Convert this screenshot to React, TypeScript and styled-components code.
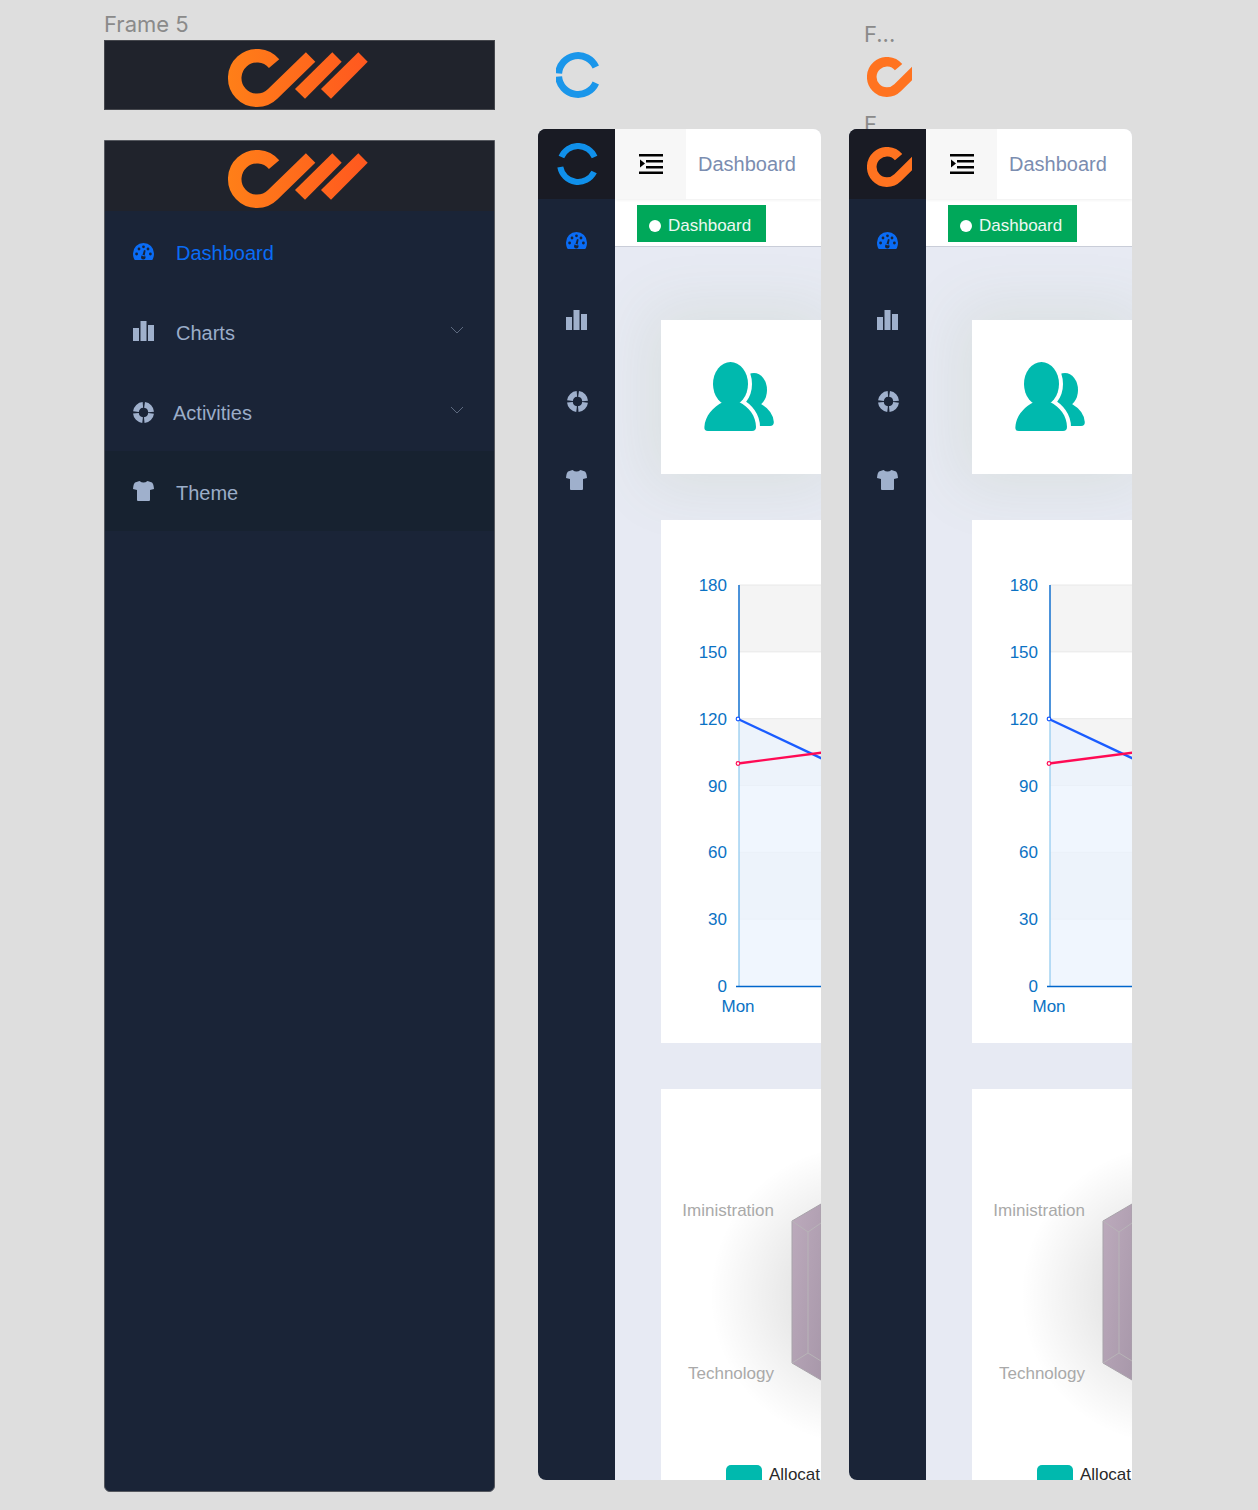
import React from "react";
import styled, { createGlobalStyle } from "styled-components";

const GlobalStyle = createGlobalStyle`
  html, body { margin: 0; padding: 0; background: #dedede; }
  body { font-family: "Liberation Sans", Arial, sans-serif; }
`;

const Canvas = styled.div`
  position: relative;
  width: 1258px;
  height: 1510px;
  overflow: hidden;
  background: #dedede;
`;

const Placed = styled.div<{ $x: number; $y: number }>`
  position: absolute;
  left: ${(p) => p.$x}px;
  top: ${(p) => p.$y}px;
`;

const FrameLabel = styled(Placed)`
  font-family: Inter, sans-serif;
  font-size: 22px;
  line-height: 24px;
  color: #8a8a8a;
`;

const LogoBar = styled.div`
  box-sizing: border-box;
  height: 70px;
  display: flex;
  justify-content: center;
  padding-top: 6px;
  background: #20232c;
`;

const TopBar = styled(Placed)`
  width: 391px;
  outline: 1px solid #45474d;
  outline-offset: -1px;
`;

const SideFrame = styled(Placed)`
  box-sizing: border-box;
  width: 391px;
  height: 1352px;
  display: flex;
  flex-direction: column;
  overflow: hidden;
  border: 1px solid #55585f;
  border-radius: 0 0 6px 6px;
  background: #1a2437;
`;

const MenuItem = styled.div<{ $dark?: boolean }>`
  flex: none;
  height: 80px;
  display: flex;
  align-items: center;
  padding: 0 30px 0 28px;
  background: ${(p) => (p.$dark ? "#172230" : "transparent")};
`;

const MenuIcon = styled.span<{ $active?: boolean; $drop?: number }>`
  display: flex;
  width: 21px;
  margin-top: ${(p) => p.$drop ?? 0}px;
  color: ${(p) => (p.$active ? "#0a6cf5" : "#9fb0cc")};
`;

const MenuText = styled.span<{ $active?: boolean; $gap?: number }>`
  flex: 1;
  margin-left: ${(p) => p.$gap ?? 22}px;
  padding-top: 4px;
  font-size: 20px;
  color: ${(p) => (p.$active ? "#0a6cf5" : "#9badc9")};
`;

const Chevron = styled.svg`
  width: 14px;
  height: 8px;
  margin-top: -3px;
  fill: none;
  stroke: #5d6a80;
  stroke-width: 1;
`;

const Phone = styled(Placed)`
  width: 283px;
  height: 1351px;
  display: flex;
  overflow: hidden;
  border-radius: 8px 8px 0 8px;
  background: #e7eaf3;
`;

const Rail = styled.div`
  position: relative;
  z-index: 2;
  flex: none;
  width: 77px;
  display: flex;
  flex-direction: column;
  background: #1a2437;
`;

const RailLogo = styled.div<{ $pad: number; $drop?: number }>`
  box-sizing: border-box;
  flex: none;
  height: 70px;
  display: flex;
  align-items: center;
  padding: ${(p) => p.$drop ?? 0}px 0 0 ${(p) => p.$pad}px;
  background: #191b24;
`;

const RailItem = styled.div<{ $active?: boolean; $dx?: number; $dy?: number }>`
  box-sizing: border-box;
  flex: none;
  height: 80px;
  display: flex;
  align-items: center;
  padding: ${(p) => p.$dy ?? 0}px 0 0 ${(p) => 28 + (p.$dx ?? 0)}px;
  color: ${(p) => (p.$active ? "#0a6cf5" : "#9fb0cc")};
`;

const Main = styled.div`
  flex: 1;
  min-width: 0;
  display: flex;
  flex-direction: column;
`;

const Header = styled.div`
  position: relative;
  z-index: 1;
  flex: none;
  height: 70px;
  display: flex;
  align-items: center;
  background: #fff;
  box-shadow: 0 1px 3px rgba(0, 0, 0, 0.07);
`;

const MenuToggle = styled.div`
  align-self: stretch;
  width: 71px;
  display: flex;
  align-items: center;
  justify-content: center;
  background: #f7f7f7;
`;

const HeaderTitle = styled.div`
  margin-left: 12px;
  font-size: 20px;
  color: #7b8db0;
`;

const TagBar = styled.div`
  box-sizing: border-box;
  flex: none;
  height: 48px;
  padding: 6px 0 0 22px;
  background: #fff;
  border-bottom: 1px solid #c9cdd8;
`;

const Tag = styled.div`
  box-sizing: border-box;
  width: 129px;
  height: 37px;
  display: flex;
  align-items: center;
  gap: 7px;
  padding: 5px 0 0 12px;
  font-size: 17px;
  color: #eef8f2;
  background: #00a85a;
`;

const TagDot = styled.span`
  width: 12px;
  height: 12px;
  border-radius: 50%;
  background: #fff;
`;

const Content = styled.div`
  flex: 1;
  display: flex;
  flex-direction: column;
  gap: 46px;
  padding: 73px 0 0 46px;
`;

const Card = styled.div<{ $height: number; $glow?: boolean }>`
  box-sizing: border-box;
  flex: none;
  height: ${(p) => p.$height}px;
  overflow: hidden;
  background: #fff;
  box-shadow: ${(p) => (p.$glow ? "0 0 58px 12px rgba(106, 134, 68, 0.1)" : "none")};
`;

const StatCard = styled(Card)`
  overflow: visible;
  display: flex;
  align-items: flex-start;
  padding-top: 40px;
  padding-left: 41px;
`;

const DrawingSvg = styled.svg`
  display: block;
  font-family: "Liberation Sans", Arial, sans-serif;
`;

// dome with five punched dots and the needle hub
const gaugeHoles = [
  [3.6, 11, 1.4],
  [6, 6, 1.4],
  [10.5, 3.8, 1.4],
  [15, 6, 1.4],
  [17.4, 11, 1.4],
  [10.3, 14.2, 2.3],
]
  .map(([x, y, r]) => `M${x - r} ${y} a${r} ${r} 0 1 0 ${2 * r} 0 a${r} ${r} 0 1 0 ${-2 * r} 0`)
  .join(" ");

const GaugeIcon = () => (
  <svg width="21" height="17" viewBox="0 0 21 17" fill="currentColor">
    <path
      fillRule="evenodd"
      d={`M1.4 16.4 C.5 15 0 12.8 0 10.5 A10.5 10.5 0 0 1 21 10.5 C21 12.8 20.5 15 19.6 16.4 Q19.2 17 18.6 17 H2.4 Q1.8 17 1.4 16.4 Z M9.2 13 L11 7 L12.6 7.4 L11.5 13.6 Z ${gaugeHoles}`}
    />
  </svg>
);

const BarsIcon = () => (
  <svg width="21" height="20" viewBox="0 0 21 20" fill="currentColor">
    <rect x="0" y="7" width="6" height="13" />
    <rect x="7.5" y="0" width="6" height="20" />
    <rect x="15" y="4" width="6" height="16" />
  </svg>
);

const RingIcon = () => (
  <svg width="21" height="21" viewBox="0 0 21 21" fill="none">
    <circle
      cx="10.5"
      cy="10.5"
      r="7.6"
      stroke="currentColor"
      strokeWidth="5.8"
      strokeDasharray="10.2 1.74"
      strokeDashoffset="-0.87"
    />
  </svg>
);

const ShirtIcon = () => (
  <svg width="21" height="20" viewBox="0 0 21 20" fill="currentColor">
    <path d="M6.5 0 Q10.5 3 14.5 0 L19 1.6 Q20.6 3 21 8 L17 9 V19 Q17 20 16 20 H5 Q4 20 4 19 V9 L0 8 Q.4 3 2 1.6 Z" />
  </svg>
);

const Wordmark = () => (
  <svg width="160" height="64" viewBox="220 146 160 64">
    <defs>
      <linearGradient id="wordmarkFill" gradientUnits="userSpaceOnUse" x1="228" y1="0" x2="368" y2="0">
        <stop offset="0" stopColor="#ff7f18" />
        <stop offset="1" stopColor="#ff581f" />
      </linearGradient>
    </defs>
    <path
      d="M274.1 163.7 A22.3 22.3 0 1 0 272.8 193.8 L310.6 157"
      fill="none"
      stroke="url(#wordmarkFill)"
      strokeWidth="13.5"
    />
    <polygon points="332.3,152.3 341.7,161.7 305,198.7 295,189" fill="url(#wordmarkFill)" />
    <polygon points="358.3,152.3 367.7,161.7 331,198.7 321,189" fill="url(#wordmarkFill)" />
  </svg>
);

const OrangeMark = () => (
  <svg width="45" height="40" viewBox="867 57 45 40" style={{ display: "block" }}>
    <path
      d="M898.6 67.2 A15.2 15.2 0 1 0 897.7 87.7 L918 67.6"
      fill="none"
      stroke="#ff7320"
      strokeWidth="9.6"
    />
  </svg>
);

const BlueMarkLoose = () => (
  <svg width="45" height="46" viewBox="0 0 45 46" style={{ display: "block" }}>
    <g fill="none" stroke="#1a96ea" strokeWidth="7">
      <path d="M2.6 21.5 A19.5 19.5 0 0 1 39.8 15" />
      <path d="M2.6 24.5 A19.5 19.5 0 0 0 39.8 31" />
    </g>
  </svg>
);

const BlueMarkFramed = () => (
  <svg width="42" height="42" viewBox="0 0 42 42" style={{ display: "block" }}>
    <g fill="none" stroke="#1090ea" strokeWidth="6">
      <path d="M4.4 14 A18 18 0 0 1 37.6 14" />
      <path d="M3.3 24 A18 18 0 0 0 37.1 29" />
    </g>
  </svg>
);

const ToggleIcon = () => (
  <svg width="24" height="20" viewBox="0 0 24 20" fill="#000">
    <rect x="0" y="0" width="24" height="2.5" />
    <rect x="7" y="6" width="17" height="2.5" />
    <rect x="7" y="12" width="17" height="2.5" />
    <rect x="0" y="17.5" width="24" height="2.5" />
    <polygon points="1,5.5 6,9.5 1,13.5" />
  </svg>
);

const UsersIcon = () => {
  const back = (
    <>
      <ellipse cx="753" cy="390" rx="13" ry="17" />
      <path d="M745 404 L760 404 Q772 411 772.8 422 Q773 426 769 426 L745 426 Z" />
    </>
  );
  const front = (
    <>
      <ellipse cx="729.5" cy="384" rx="17.5" ry="22" />
      <path d="M703.4 427 C704 416 712 407 722 402 L738 402 C748 407 755 416 755 427 Q755 431 751 431 L707 431 Q703 431 703.4 427 Z" />
    </>
  );
  return (
    <svg width="75" height="75" viewBox="701 360 75 75">
      <g fill="#00b9ae">{back}</g>
      <g fill="#fff" stroke="#fff" strokeWidth="8">{front}</g>
      <g fill="#00b9ae">{front}</g>
    </svg>
  );
};

const yTicks = [180, 150, 120, 90, 60, 30, 0];
const tickY = (v: number) => 986 - (v / 30) * 66.83;

const LineChart = () => (
  <DrawingSvg width="160" height="523" viewBox="661 520 160 523">
    {[180, 120, 60].map((v) => (
      <rect key={v} x="739" y={tickY(v)} width="90" height="66.83" fill="#f4f4f4" />
    ))}
    {yTicks.slice(0, -1).map((v) => (
      <line key={v} x1="739" x2="829" y1={tickY(v)} y2={tickY(v)} stroke="#e8e8e8" />
    ))}
    <polygon points="739,719 821,758 821,986 739,986" fill="rgba(234, 243, 254, 0.73)" />
    <line x1="739" x2="739" y1="719" y2="986" stroke="#8cc8ee" strokeWidth="1.2" />
    <line x1="739" x2="739" y1="585" y2="719" stroke="#0066cc" strokeWidth="1.4" />
    <line x1="736" x2="821" y1="986.5" y2="986.5" stroke="#0066cc" strokeWidth="1.6" />
    <line x1="738" x2="823" y1="719" y2="759" stroke="#1a5cff" strokeWidth="2.4" />
    <line x1="738" x2="823" y1="763.5" y2="752.5" stroke="#ff0a54" strokeWidth="2.4" />
    <circle cx="738" cy="719" r="1.8" fill="#fff" stroke="#1a5cff" strokeWidth="1.2" />
    <circle cx="738" cy="763.5" r="1.8" fill="#fff" stroke="#ff0a54" strokeWidth="1.2" />
    <g fill="#0b72c4" fontSize="17" textAnchor="end">
      {yTicks.map((v) => (
        <text key={v} x="727" y={tickY(v) + 6}>
          {v}
        </text>
      ))}
    </g>
    <text x="721.5" y="1012" fill="#0b72c4" fontSize="17">
      Mon
    </text>
  </DrawingSvg>
);

const BoxChart = () => (
  <DrawingSvg width="160" height="391" viewBox="661 1089 160 391">
    <defs>
      <radialGradient id="boxShade" gradientUnits="userSpaceOnUse" cx="860" cy="1295" r="150">
        <stop offset="0.4" stopColor="#000" stopOpacity="0.1" />
        <stop offset="1" stopColor="#000" stopOpacity="0" />
      </radialGradient>
      <linearGradient id="boxFill" x1="0" y1="0" x2="1" y2="1">
        <stop offset="0" stopColor="#bcaabc" />
        <stop offset="1" stopColor="#a898aa" />
      </linearGradient>
    </defs>
    <rect x="661" y="1089" width="160" height="391" fill="url(#boxShade)" />
    <polygon points="792,1221 821,1204 821,1380 792,1363" fill="url(#boxFill)" stroke="#a8a3aa" />
    <g fill="none" stroke="#b8b4b8" strokeWidth="1">
      <path d="M792 1221 L808 1232 V1353 L792 1363" />
      <path d="M808 1232 L821 1223" />
      <path d="M808 1353 L821 1361" />
    </g>
    <g fill="#a9a9a9" fontSize="17" textAnchor="end">
      <text x="774" y="1216">Iministration</text>
      <text x="774" y="1379">Technology</text>
    </g>
    <rect x="726" y="1465" width="36" height="30" rx="5" fill="#00b9ae" />
    <text x="769" y="1480" fill="#2a2a2a" fontSize="17">
      Allocat
    </text>
  </DrawingSvg>
);

type DeviceProps = { x: number; logo: React.ReactNode; pad: number; drop?: number };

const Device = ({ x, logo, pad, drop }: DeviceProps) => (
  <Phone $x={x} $y={129}>
    <Rail>
      <RailLogo $pad={pad} $drop={drop}>{logo}</RailLogo>
      <RailItem $active $dy={2}><GaugeIcon /></RailItem>
      <RailItem $dy={1}><BarsIcon /></RailItem>
      <RailItem $dx={1} $dy={5}><RingIcon /></RailItem>
      <RailItem $dy={1}><ShirtIcon /></RailItem>
    </Rail>
    <Main>
      <Header>
        <MenuToggle><ToggleIcon /></MenuToggle>
        <HeaderTitle>Dashboard</HeaderTitle>
      </Header>
      <TagBar>
        <Tag>
          <TagDot />
          Dashboard
        </Tag>
      </TagBar>
      <Content>
        <StatCard $height={154} $glow><UsersIcon /></StatCard>
        <Card $height={523}><LineChart /></Card>
        <Card $height={391}><BoxChart /></Card>
      </Content>
    </Main>
  </Phone>
);

const ArrowDown = () => (
  <Chevron viewBox="0 0 14 8">
    <polyline points="1,1 7,7 13,1" />
  </Chevron>
);

export default function App() {
  return (
    <Canvas>
      <GlobalStyle />
      <FrameLabel $x={104} $y={12}>Frame 5</FrameLabel>
      <TopBar $x={104} $y={40}>
        <LogoBar><Wordmark /></LogoBar>
      </TopBar>

      <SideFrame $x={104} $y={140}>
        <LogoBar><Wordmark /></LogoBar>
        <MenuItem>
          <MenuIcon $active><GaugeIcon /></MenuIcon>
          <MenuText $active>Dashboard</MenuText>
        </MenuItem>
        <MenuItem>
          <MenuIcon><BarsIcon /></MenuIcon>
          <MenuText>Charts</MenuText>
          <ArrowDown />
        </MenuItem>
        <MenuItem>
          <MenuIcon $drop={2}><RingIcon /></MenuIcon>
          <MenuText $gap={19}>Activities</MenuText>
          <ArrowDown />
        </MenuItem>
        <MenuItem $dark>
          <MenuIcon><ShirtIcon /></MenuIcon>
          <MenuText>Theme</MenuText>
        </MenuItem>
      </SideFrame>

      <Placed $x={556} $y={52}><BlueMarkLoose /></Placed>
      <FrameLabel $x={864} $y={22}>F...</FrameLabel>
      <Placed $x={867} $y={57}><OrangeMark /></Placed>
      <FrameLabel $x={864} $y={112}>F...</FrameLabel>

      <Device x={538} logo={<BlueMarkFramed />} pad={19} />
      <Device x={849} logo={<OrangeMark />} pad={18} drop={5} />
    </Canvas>
  );
}
